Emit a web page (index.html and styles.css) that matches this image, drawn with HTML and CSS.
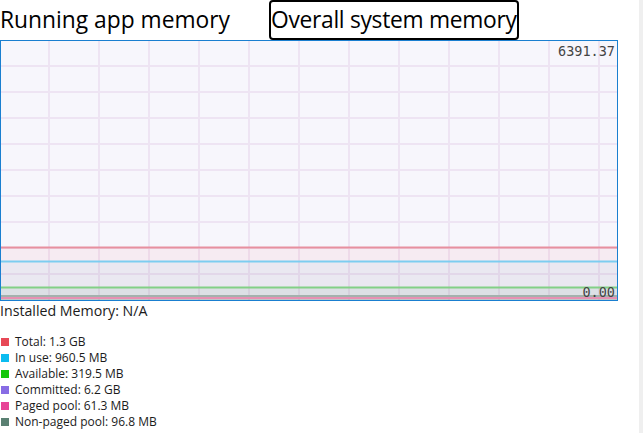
FILE: index.html
```html
<!doctype html>
<html>
<head>
<meta charset="utf-8">
<link rel="stylesheet" href="styles.css">
</head>
<body>
<div class="page">
	<div class="tabs">
		<span class="tab">Running app memory</span>
		<span class="tab tab-focus">Overall system memory</span>
	</div>

	<div class="chart">
		<svg class="plot" width="616" height="259" viewBox="0 0 616 259">
			<g stroke="#eee4f3" stroke-width="2">
				<line x1="48" y1="0" x2="48" y2="259"/>
				<line x1="98" y1="0" x2="98" y2="259"/>
				<line x1="148" y1="0" x2="148" y2="259"/>
				<line x1="198" y1="0" x2="198" y2="259"/>
				<line x1="248" y1="0" x2="248" y2="259"/>
				<line x1="298" y1="0" x2="298" y2="259"/>
				<line x1="348" y1="0" x2="348" y2="259"/>
				<line x1="398" y1="0" x2="398" y2="259"/>
				<line x1="448" y1="0" x2="448" y2="259"/>
				<line x1="498" y1="0" x2="498" y2="259"/>
				<line x1="548" y1="0" x2="548" y2="259"/>
				<line x1="598" y1="0" x2="598" y2="259"/>
				<line x1="0" y1="25" x2="616" y2="25"/>
				<line x1="0" y1="51" x2="616" y2="51"/>
				<line x1="0" y1="77" x2="616" y2="77"/>
				<line x1="0" y1="103" x2="616" y2="103"/>
				<line x1="0" y1="129" x2="616" y2="129"/>
				<line x1="0" y1="155" x2="616" y2="155"/>
				<line x1="0" y1="181" x2="616" y2="181"/>
				<line x1="0" y1="207" x2="616" y2="207"/>
				<line x1="0" y1="233" x2="616" y2="233"/>
			</g>
			<!-- areas under each series -->
			<rect x="0" y="206" width="616" height="53" fill="#e74856" fill-opacity="0.06"/>
			<rect x="0" y="220" width="616" height="39" fill="#0cb4ec" fill-opacity="0.05"/>
			<rect x="0" y="246" width="616" height="13" fill="#3f8a5c" fill-opacity="0.08"/>
			<rect x="0" y="254" width="616" height="5" fill="#5a7d72" fill-opacity="0.25"/>
			<g stroke-width="2">
				<line x1="0" y1="206.5" x2="616" y2="206.5" stroke="#e7909f"/>
				<line x1="0" y1="220.5" x2="616" y2="220.5" stroke="#7ccdf0"/>
				<line x1="0" y1="246.5" x2="616" y2="246.5" stroke="#82d086"/>
				<line x1="0" y1="255" x2="616" y2="255" stroke="#a3b1ad"/>
				<line x1="0" y1="257" x2="616" y2="257" stroke="#e791b3"/>
			</g>
		</svg>
		<span class="axis axis-top">6391.37</span>
		<span class="axis axis-bottom">0.00</span>
	</div>

	<p class="installed">Installed Memory: N/A</p>

	<ul class="legend">
		<li><i class="swatch total"></i>Total: 1.3 GB</li>
		<li><i class="swatch inuse"></i>In use: 960.5 MB</li>
		<li><i class="swatch avail"></i>Available: 319.5 MB</li>
		<li><i class="swatch commit"></i>Committed: 6.2 GB</li>
		<li><i class="swatch paged"></i>Paged pool: 61.3 MB</li>
		<li><i class="swatch nonpaged"></i>Non-paged pool: 96.8 MB</li>
	</ul>
</div>
<div class="scrolltrack"></div>
</body>
</html>
```

FILE: styles.css
```css
*{margin:0; padding:0; list-style:none; box-sizing:border-box;}
body{
	font-family:"Open Sans","Noto Sans",sans-serif;
	color:#1b1b1b; background:#fff;
	overflow:hidden;
}
.page{width:639px;}

.tabs{
	display:flex; align-items:center;
	height:40px; gap:39px;
}
.tab{
	font-size:22.8px; line-height:36px;
	color:#000;
}
.tab-focus{
	border:2px solid #000; border-radius:4px;
	height:40px; line-height:36px;
	letter-spacing:-0.3px;
}

.chart{
	position:relative;
	width:618px; height:261px;
	border:1px solid #1a7fd0;
	background:#f7f6fc;
}
.plot{display:block;}
.axis{
	position:absolute; right:2px;
	font-family:"DejaVu Sans Mono","Liberation Mono",monospace;
	font-size:13.5px; color:#444; line-height:14px;
}
.axis-top{top:3px;}
.axis-bottom{bottom:1px;}

.installed{
	font-size:14.2px; line-height:19px;
	color:#1b1b1b;
}
.legend{margin-top:14px;}
.legend li{
	display:flex; align-items:center;
	font-size:12px; line-height:16px; height:16px;
	color:#1b1b1b;
}
.swatch{
	width:8px; height:8px; margin:0 6px 0 1px;
	display:inline-block;
}
.total{background:#e74856;}
.inuse{background:#0cbcf0;}
.avail{background:#16c60c;}
.commit{background:#886ce4;}
.paged{background:#e74496;}
.nonpaged{background:#5a8072;}

.scrolltrack{
	position:fixed; right:0; top:0;
	width:4px; height:100%;
	background:#efefef;
}
```
